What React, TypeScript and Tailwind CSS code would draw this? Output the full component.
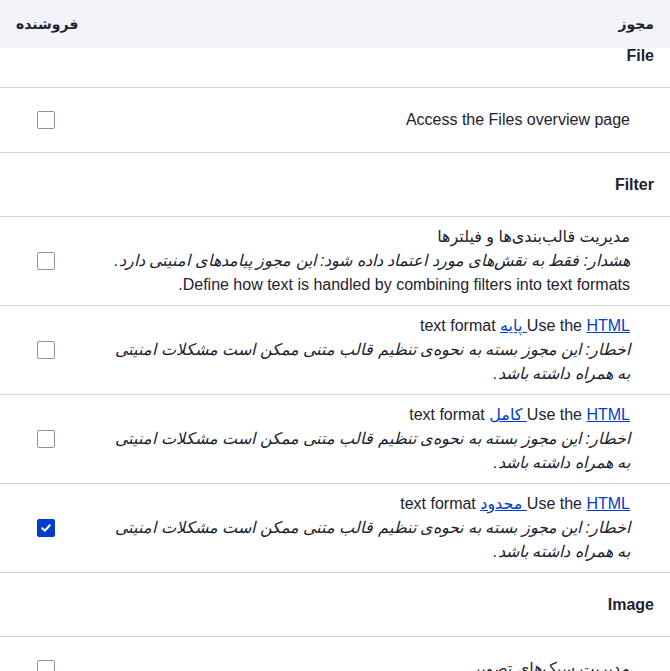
const Link = ({ children }: { children: React.ReactNode }) => (
  <a href="#" className="text-[#003ecc] underline">
    {children}
  </a>
);

function Checkbox({ checked }: { checked?: boolean }) {
  if (checked) {
    return (
      <span className="flex h-[18px] w-[18px] items-center justify-center rounded-[2px] bg-[#003ecc]">
        <svg width="12" height="12" viewBox="0 0 12 12" fill="none">
          <path d="M2.2 6.2l2.6 2.5 5-5.4" stroke="#fff" strokeWidth="2" strokeLinecap="round" strokeLinejoin="round" />
        </svg>
      </span>
    );
  }
  return <span className="block h-[18px] w-[18px] rounded-[2px] border border-[#8e929c] bg-white" />;
}

function GroupRow({ title, first }: { title: string; first?: boolean }) {
  return (
    <div className={`flex h-[64px] items-center border-b border-[#d3d4d9] px-4 font-bold ${first ? "-mt-[24px]" : ""}`}>
      {title}
    </div>
  );
}

function PermRow({ children, checked }: { children: React.ReactNode; checked?: boolean }) {
  return (
    <div className="flex min-h-[65px] items-center border-b border-[#d3d4d9]">
      <div className="flex-1 py-2 pr-10 pl-4 leading-6">{children}</div>
      <div className="flex w-[92px] shrink-0 items-center justify-center">
        <Checkbox checked={checked} />
      </div>
    </div>
  );
}

const WARNING = "اخطار: این مجوز بسته به نحوه‌ی تنظیم قالب متنی ممکن است مشکلات امنیتی به همراه داشته باشد.";

export default function App() {
  return (
    <div
      dir="rtl"
      className="h-[671px] w-[670px] overflow-hidden bg-white text-base text-[#222330]"
      style={{ fontFamily: '"Liberation Sans", "DejaVu Sans", sans-serif' }}
    >
      {/* sticky table header, sits over the first group row */}
      <div className="relative z-10 flex h-12 items-center justify-between bg-[#f3f4f9] px-4 text-[14px] font-bold">
        <span>مجوز</span>
        <span>فروشنده</span>
      </div>

      <GroupRow title="File" first />
      <PermRow>
        <div>Access the Files overview page</div>
      </PermRow>

      <GroupRow title="Filter" />
      <PermRow>
        <div>مدیریت قالب‌بندی‌ها و فیلترها</div>
        <div className="italic">هشدار: فقط به نقش‌های مورد اعتماد داده شود: این مجوز پیامدهای امنیتی دارد.</div>
        <div>Define how text is handled by combining filters into text formats.</div>
      </PermRow>
      <PermRow>
        <div>
          Use the <Link>HTML پایه</Link> text format
        </div>
        <div className="italic">{WARNING}</div>
      </PermRow>
      <PermRow>
        <div>
          Use the <Link>HTML کامل</Link> text format
        </div>
        <div className="italic">{WARNING}</div>
      </PermRow>
      <PermRow checked>
        <div>
          Use the <Link>HTML محدود</Link> text format
        </div>
        <div className="italic">{WARNING}</div>
      </PermRow>

      <GroupRow title="Image" />
      <PermRow>
        <div>مدیریت سبک‌های تصویر</div>
      </PermRow>
    </div>
  );
}
